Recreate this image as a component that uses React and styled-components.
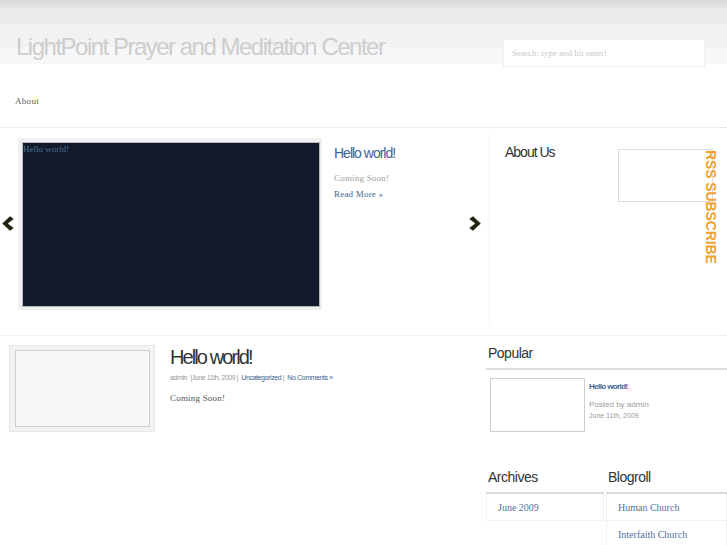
import React from "react";
import styled, { createGlobalStyle } from "styled-components";

const Global = createGlobalStyle`
  html, body { margin: 0; padding: 0; background: #fff; }
  body { font-family: "Liberation Serif", serif; overflow: hidden; }
  * { box-sizing: border-box; }
`;

const Page = styled.div`
  width: 727px;
  height: 545px;
  overflow: hidden;
`;

const Header = styled.div`
  height: 64px;
  display: flex;
  justify-content: space-between;
  align-items: flex-end;
  padding: 0 22px 0 16px;
  background: linear-gradient(
    to bottom,
    #d9d9d9 0px, #e3e3e3 7px, #ebebeb 9px, #ebebeb 24px,
    #f2f2f2 24px, #f2f2f2 47px, #f6f7f9 47px, #f6f7f9 64px
  );
`;

const SiteTitle = styled.div`
  font-family: "Liberation Sans", Arial, sans-serif;
  font-size: 24px;
  letter-spacing: -1.5px;
  color: #cdcdcd;
  line-height: 24px;
  padding-bottom: 5px;
`;

const Search = styled.div`
  width: 202px;
  height: 28px;
  margin-bottom: -3px;
  background: #fff;
  border: 1px solid #f0f0f0;
  display: flex;
  align-items: center;
  padding-left: 8px;
  font-size: 9px;
  color: #c8c8c8;
`;

const Nav = styled.div`
  height: 64px;
  display: flex;
  align-items: center;
  padding: 10px 0 0 15px;
  font-size: 9px;
  color: #5c5c5c;
  letter-spacing: 0.3px;
  border-bottom: 1px dotted #ddd;
`;

const Featured = styled.div`
  display: flex;
  height: 208px;
  border-bottom: 1px dotted #e6e6e6;
`;

const SliderArea = styled.div`
  width: 490px;
  display: flex;
  padding-top: 3px;
  border-right: 1px dotted #e8e8e8;
  margin: 7px 0 9px;
`;

const Arrow = styled.div`
  width: ${(p) => p.$w}px;
  height: 172px;
  display: flex;
  align-items: center;
  padding-left: ${(p) => p.$pl}px;
  padding-bottom: 2px;
`;

const Frame = styled.div`
  width: 304px;
  height: 172px;
  padding: 4px 2px 3px 4px;
  background: #f0f0f0;
`;

const Shot = styled.div`
  height: 100%;
  background: #111a2a;
  border: 1px solid #b8b8b8;
  font-size: 9px;
  color: #4d6d94;
  line-height: 10px;
  padding: 1px 0 0 0;
`;

const SlideText = styled.div`
  width: 145px;
  padding: 7px 0 0 12px;
`;

const SlideTitle = styled.div`
  font-family: "Liberation Sans", Arial, sans-serif;
  font-size: 14px;
  letter-spacing: -1px;
  color: #3e6591;
  margin-bottom: 12px;
`;

const Small = styled.div`
  font-size: 9px;
  color: ${(p) => p.$color};
  margin-bottom: ${(p) => p.$mb || 0}px;
  letter-spacing: 0.2px;
`;

const AboutArea = styled.div`
  flex: 1;
  display: flex;
  justify-content: space-between;
  padding: 16px 14px 0 15px;
  position: relative;
`;

const WidgetTitle = styled.div`
  font-family: "Liberation Sans", Arial, sans-serif;
  font-size: 14px;
  letter-spacing: ${(p) => p.$ls || -0.5}px;
  color: #333;
  line-height: 16px;
`;

const AdBox = styled.div`
  width: 95px;
  height: 53px;
  border: 1px solid #dcdcdc;
  margin-top: 5px;
`;

const Rss = styled.div`
  position: absolute;
  right: 8px;
  top: 22px;
  writing-mode: vertical-rl;
  font-family: "Liberation Sans", Arial, sans-serif;
  font-weight: bold;
  font-size: 14px;
  letter-spacing: -0.1px;
  color: #f2a22c;
`;

const Bottom = styled.div`
  display: flex;
`;

const Post = styled.div`
  width: 486px;
  display: flex;
  padding: 9px 0 0 9px;
`;

const Thumb = styled.div`
  width: 146px;
  height: 87px;
  background: #f3f3f3;
  border: 1px solid #e6e6e6;
  padding: 4px 4px 4px 5px;
`;

const ThumbInner = styled.div`
  height: 100%;
  background: #f6f7f9;
  border: 1px solid #cdcdcd;
`;

const PostBody = styled.div`
  padding: 1px 0 0 15px;
`;

const PostTitle = styled.div`
  font-family: "Liberation Sans", Arial, sans-serif;
  font-size: 20px;
  letter-spacing: -1.9px;
  color: #333;
  line-height: 22px;
`;

const Meta = styled.div`
  font-family: "Liberation Sans", Arial, sans-serif;
  font-size: 7px;
  letter-spacing: -0.4px;
  color: #999;
  margin: 6px 0 12px;
  a { color: #3e6591; text-decoration: none; }
`;

const Sidebar = styled.div`
  flex: 1;
  padding-top: 9px;
`;

const SideHead = styled.div`
  padding: 0 0 7px 2px;
  border-bottom: 2px solid #dcdcdc;
`;

const PopRow = styled.div`
  display: flex;
  padding: 8px 0 0 4px;
`;

const PopThumb = styled.div`
  width: 95px;
  height: 54px;
  border: 1px solid #cfcfcf;
`;

const PopInfo = styled.div`
  padding: 4px 0 0 4px;
  font-family: "Liberation Sans", Arial, sans-serif;
`;

const PopLink = styled.div`
  font-size: 8px;
  font-weight: bold;
  letter-spacing: -0.6px;
  color: #3e6591;
  margin-bottom: 8px;
`;

const PopMeta = styled.div`
  font-size: ${(p) => p.$size}px;
  color: #9a9a9a;
  line-height: 11px;
`;

const Columns = styled.div`
  display: flex;
  gap: 2px;
  margin-top: 37px;
`;

const Column = styled.div`
  width: ${(p) => p.$w}px;
`;

const ListItem = styled.div`
  height: 27px;
  display: flex;
  align-items: center;
  padding-left: ${(p) => p.$pl}px;
  font-size: 10px;
  color: #4f72a0;
  border: 1px solid #f0f0f0;
  border-top: none;
`;

const ChevronLeft = () => (
  <svg width="14" height="17" viewBox="0 0 14 17">
    <path d="M9 1 L1 8.5 L9 16 L13 13 L7 8.5 L13 4 Z" fill="#1d2511" stroke="#dfe2d6" strokeWidth="0.6" />
  </svg>
);

const ChevronRight = () => (
  <svg width="14" height="17" viewBox="0 0 14 17">
    <path d="M5 1 L13 8.5 L5 16 L1 13 L7 8.5 L1 4 Z" fill="#1d2511" stroke="#dfe2d6" strokeWidth="0.6" />
  </svg>
);

export default function App() {
  return (
    <Page>
      <Global />
      <Header>
        <SiteTitle>LightPoint Prayer and Meditation Center</SiteTitle>
        <Search>Search: type and hit enter!</Search>
      </Header>
      <Nav>About</Nav>
      <Featured>
        <SliderArea>
          <Arrow $w={18} $pl={1}>
            <ChevronLeft />
          </Arrow>
          <Frame>
            <Shot>Hello world!</Shot>
          </Frame>
          <SlideText>
            <SlideTitle>Hello world!</SlideTitle>
            <Small $color="#a0a0a0" $mb={6}>Coming Soon!</Small>
            <Small $color="#3e6591">Read More »</Small>
          </SlideText>
          <Arrow $w={22} $pl={1}>
            <ChevronRight />
          </Arrow>
        </SliderArea>
        <AboutArea>
          <WidgetTitle $ls={-1}>About Us</WidgetTitle>
          <AdBox />
          <Rss>RSS SUBSCRIBE</Rss>
        </AboutArea>
      </Featured>
      <Bottom>
        <Post>
          <Thumb>
            <ThumbInner />
          </Thumb>
          <PostBody>
            <PostTitle>Hello world!</PostTitle>
            <Meta>
              admin&nbsp; |June 11th, 2009 |&nbsp; <a>Uncategorized</a> |&nbsp; <a>No Comments »</a>
            </Meta>
            <Small $color="#555">Coming Soon!</Small>
          </PostBody>
        </Post>
        <Sidebar>
          <SideHead>
            <WidgetTitle>Popular</WidgetTitle>
          </SideHead>
          <PopRow>
            <PopThumb />
            <PopInfo>
              <PopLink>Hello world!</PopLink>
              <PopMeta $size={8}>Posted by admin</PopMeta>
              <PopMeta $size={7}>June 11th, 2009</PopMeta>
            </PopInfo>
          </PopRow>
          <Columns>
            <Column $w={118}>
              <SideHead>
                <WidgetTitle>Archives</WidgetTitle>
              </SideHead>
              <ListItem $pl={11}>June 2009</ListItem>
            </Column>
            <Column $w={121}>
              <SideHead>
                <WidgetTitle>Blogroll</WidgetTitle>
              </SideHead>
              <ListItem $pl={11}>Human Church</ListItem>
              <ListItem $pl={11}>Interfaith Church</ListItem>
            </Column>
          </Columns>
        </Sidebar>
      </Bottom>
    </Page>
  );
}
